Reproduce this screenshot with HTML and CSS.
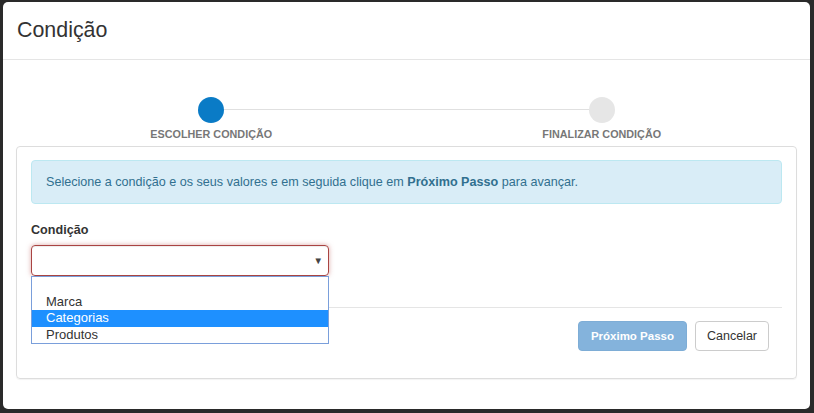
FILE: index.html
```html
<!DOCTYPE html>
<html lang="pt">
<head>
<meta charset="utf-8">
<title>Condição</title>
<link rel="stylesheet" href="styles.css">
</head>
<body>
<div class="modal">
  <div class="modal-header">
    <h4 class="modal-title">Condição</h4>
  </div>
  <div class="modal-body">
    <div class="steps">
      <div class="step active">
        <span class="dot"></span>
        <span class="step-label">ESCOLHER CONDIÇÃO</span>
      </div>
      <div class="step">
        <span class="dot"></span>
        <span class="step-label">FINALIZAR CONDIÇÃO</span>
      </div>
    </div>
    <div class="panel">
      <div class="alert">Selecione a condição e os seus valores e em seguida clique em <b>Próximo Passo</b> para avançar.</div>
      <label class="field-label">Condição</label>
      <div class="select-wrap">
        <div class="select"><span class="caret">▼</span></div>
        <ul class="options">
          <li class="opt"></li>
          <li class="opt">Marca</li>
          <li class="opt selected">Categorias</li>
          <li class="opt">Produtos</li>
        </ul>
      </div>
      <div class="footer">
        <button class="btn btn-primary" disabled>Próximo Passo</button>
        <button class="btn btn-default">Cancelar</button>
      </div>
    </div>
  </div>
</div>
</body>
</html>
```

FILE: styles.css
```css
* { box-sizing: border-box; }
html, body { margin: 0; padding: 0; }
body {
  background: #2a2a2a;
  padding: 2px 4px 4px 3px;
  font-family: "Liberation Sans", Arial, sans-serif;
  color: #333;
  width: 814px;
  height: 413px;
  overflow: hidden;
}
.modal {
  width: 807px;
  height: 407px;
  background: #fff;
  border-radius: 5px;
  overflow: hidden;
}
.modal-header {
  padding: 17px 14px;
  border-bottom: 1px solid #e5e5e5;
  height: 58px;
}
.modal-title {
  margin: 0;
  font-size: 21.4px;
  font-weight: normal;
  line-height: 23px;
  color: #333;
}
.modal-body {
  padding: 37px 13px 30px 13px;
}
.steps {
  display: grid;
  grid-template-columns: 1fr 1fr;
  position: relative;
}
.step {
  display: flex;
  flex-direction: column;
  align-items: center;
  position: relative;
}
.dot {
  width: 26px;
  height: 26px;
  border-radius: 50%;
  background: #e6e6e6;
  position: relative;
  z-index: 1;
}
.step.active .dot { background: #0a7bc6; }
.step:first-child::after {
  content: "";
  position: absolute;
  left: 50%;
  width: 100%;
  top: 12px;
  height: 1px;
  background: #e0e0e0;
}
.step-label {
  margin-top: 4px;
  font-size: 10.8px;
  font-weight: bold;
  line-height: 14px;
  color: #777;
}
.panel {
  margin-top: 5px;
  border: 1px solid #ddd;
  border-radius: 4px;
  padding: 13px 14px 26px 14px;
  height: 233px;
  box-shadow: 0 1px 1px rgba(0,0,0,0.05);
}
.alert {
  background: #d9edf7;
  border: 1px solid #bce8f1;
  border-radius: 4px;
  color: #31708f;
  font-size: 12.6px;
  line-height: 18px;
  padding: 12px 14px;
}
.alert b { font-weight: bold; }
.field-label {
  display: block;
  margin-top: 17px;
  font-size: 12.6px;
  font-weight: bold;
  line-height: 18px;
  color: #333;
}
.select-wrap {
  position: relative;
  margin-top: 6px;
  width: 298px;
}
.select {
  height: 31px;
  border: 1px solid #a94442;
  border-radius: 4px;
  box-shadow: inset 0 1px 1px rgba(0,0,0,0.075), 0 0 5px rgba(206,132,131,0.7);
  display: flex;
  align-items: center;
  justify-content: flex-end;
  padding-right: 5px;
}
.caret {
  font-size: 9.5px;
  color: #444;
  line-height: 1;
}
.options {
  position: absolute;
  left: 0;
  top: 31px;
  width: 298px;
  margin: 0;
  padding: 0;
  list-style: none;
  border: 1px solid #7a9fdb;
  background: #fff;
  z-index: 5;
}
.opt {
  height: 16.5px;
  line-height: 16.5px;
  padding-left: 14px;
  font-size: 13px;
  color: #333;
}
.opt.selected {
  background: #1e90ff;
  color: #fff;
}
.footer {
  margin-top: 31px;
  border-top: 1px solid #e5e5e5;
  padding: 13px 13px 0 0;
  display: flex;
  justify-content: flex-end;
  gap: 8px;
}
.btn {
  height: 30px;
  border-radius: 4px;
  font-family: "Liberation Sans", Arial, sans-serif;
  font-size: 12.5px;
  padding: 0 11px;
  border: 1px solid #ccc;
  background: #fff;
  color: #333;
}
.btn-primary {
  background: #84b3dc;
  border-color: #7eadd6;
  color: #fff;
  font-weight: bold;
  font-size: 11.5px;
  padding: 0 12px;
}
```
